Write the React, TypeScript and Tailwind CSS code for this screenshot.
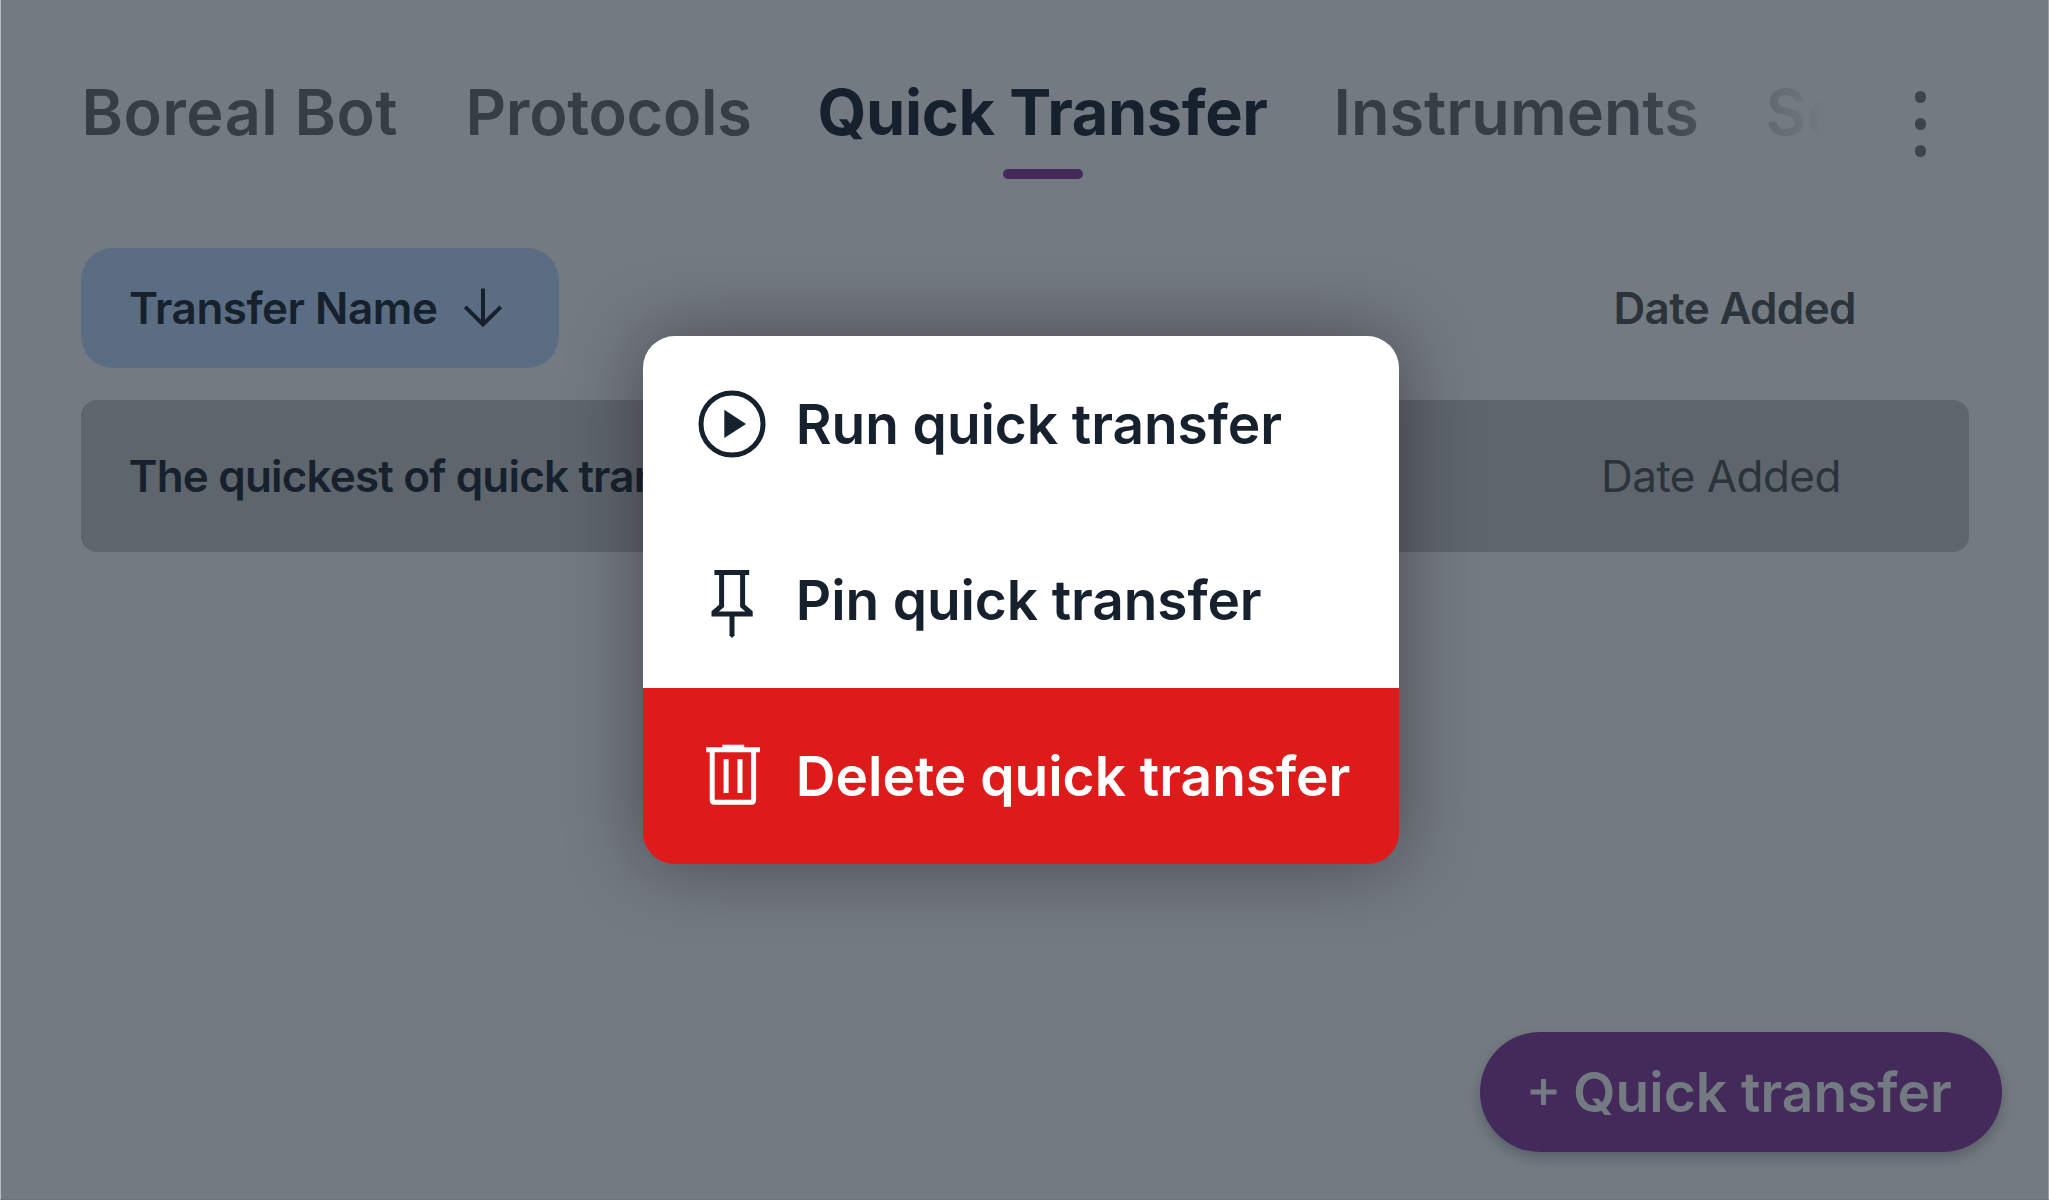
import React from 'react';

function ArrowDown() {
  return (
    <svg width="40" height="40" viewBox="0 0 40 40" fill="none" stroke="#16212D" strokeWidth="4">
      <path d="M20 0.5V36.5" />
      <path d="M2.2 18.8L20 36.4L37.8 18.8" />
    </svg>
  );
}

function PlayIcon() {
  return (
    <svg width="68" height="68" viewBox="0 0 68 68" fill="none">
      <circle cx="34" cy="34" r="31" stroke="#16212D" strokeWidth="5" />
      <path d="M26.3 19.8V48L48 34Z" fill="#16212D" />
    </svg>
  );
}

function PinIcon() {
  return (
    <svg width="68" height="68" viewBox="0 0 68 68" fill="none" stroke="#16212D" strokeWidth="5" className="overflow-visible">
      <path d="M16.4 6.5H51.2" />
      <path d="M23.6 6.5V39.8L16 46.4V48.1H52.2V46.4L44.6 39.8V6.5" />
      <path d="M34 50V70" />
      <path d="M32 69.5L34 71.5L36 69.5Z" fill="#16212D" strokeWidth="1" />
    </svg>
  );
}

function TrashIcon() {
  return (
    <svg width="68" height="68" viewBox="0 0 68 68" fill="none" stroke="#FFFFFF" strokeWidth="5" className="-mt-[4px]">
      <path d="M8.2 9.7H62" />
      <path d="M24.3 7.2H46.2" />
      <path d="M14.2 10V60.1Q14.2 62.3 16.4 62.3H53.4Q55.6 62.3 55.6 60.1V10" />
      <path d="M28.1 19.2V53" />
      <path d="M42 19.2V53" />
    </svg>
  );
}

export default function App() {
  return (
    <div className="relative flex h-[1200px] w-[2049px] flex-col overflow-hidden border-x border-b border-l-[#B9BDC0] border-r-[#9CA1A6] border-b-[#6D717A] bg-[#737A81] font-['Inter',sans-serif] font-semibold whitespace-nowrap text-[#16212D]">
      <header className="flex h-[248px] shrink-0 pt-[72px] pl-[80.5px]">
        <nav className="flex w-[1741px] overflow-hidden text-[63px] leading-[80px] text-[#363D45] [mask-image:linear-gradient(to_right,black_1550px,transparent_1741px)]">
          <span className="w-[384px] shrink-0 tracking-[0.45px]">Boreal Bot</span>
          <span className="w-[352px] shrink-0 tracking-[-0.3px]">Protocols</span>
          <div className="flex w-[516px] shrink-0 flex-col">
            <span className="font-bold tracking-[-0.35px] text-[#16212D]">Quick Transfer</span>
            <span className="mt-[17px] ml-[185px] h-[10px] w-[80px] rounded-[5px] bg-[#442A5B]" />
          </div>
          <span className="w-[432px] shrink-0">Instruments</span>
          <span className="shrink-0">Settings</span>
        </nav>
        <div className="mt-[19px] ml-[92px] flex flex-col gap-[15.6px]">
          <span className="size-[11.5px] rounded-full bg-[#3C444C]" />
          <span className="size-[11.5px] rounded-full bg-[#3C444C]" />
          <span className="size-[11.5px] rounded-full bg-[#3C444C]" />
        </div>
      </header>

      <main className="flex flex-col gap-8 pr-[79.5px] pl-[79.5px] text-[44px]">
        <div className="flex h-[120px] items-center justify-between pr-[112px]">
          <button className="flex h-[120px] w-[478px] items-center gap-[25px] rounded-[32px] bg-[#5B6D82] pl-[48.5px]">
            <span className="w-[309px] text-left tracking-[-0.5px]">Transfer Name</span>
            <ArrowDown />
          </button>
          <span className="w-[243px] tracking-[-0.67px] text-[#2B333B]">Date Added</span>
        </div>
        <div className="flex h-[152px] items-center justify-between rounded-2xl bg-[#5E656C] pr-[127.5px] pl-[48px]">
          <span className="tracking-[-0.83px]">The quickest of quick transfers</span>
          <span className="w-[240px] font-normal tracking-[-0.54px] text-[#2B333B]">Date Added</span>
        </div>
      </main>

      <button className="mt-auto mr-[46px] mb-[47px] flex h-[120px] w-[522px] items-center gap-[15px] self-end rounded-full bg-[#442A5B] pl-[47px] text-[55px] text-[#737A81] shadow-[0_6px_12px_rgba(22,33,45,0.28)]">
        <svg width="31" height="28" viewBox="0 0 31 28" stroke="currentColor" strokeWidth="5">
          <path d="M3.5 14H29.5M16.5 1V27" />
        </svg>
        <span className="tracking-[0.03px]">Quick transfer</span>
      </button>

      <div className="absolute top-[336px] left-[642.3px] flex h-[528px] w-[756px] flex-col rounded-[32px] bg-[linear-gradient(#FFFFFF_66.6%,#DE1B1B_66.6%)] text-[55px] shadow-[0_0_76px_rgba(20,0,16,0.42)]">
        <div className="flex h-[176px] items-center gap-[30px] pl-[54.5px]">
          <PlayIcon />
          <span className="tracking-[-0.06px]">Run quick transfer</span>
        </div>
        <div className="flex h-[176px] items-center gap-[30px] pl-[54.5px]">
          <PinIcon />
          <span className="tracking-[-0.1px]">Pin quick transfer</span>
        </div>
        <div className="flex h-[176px] items-center gap-[30px] rounded-b-[32px] bg-[#DE1B1B] pl-[54.5px] text-white">
          <TrashIcon />
          <span>Delete quick transfer</span>
        </div>
      </div>
    </div>
  );
}
